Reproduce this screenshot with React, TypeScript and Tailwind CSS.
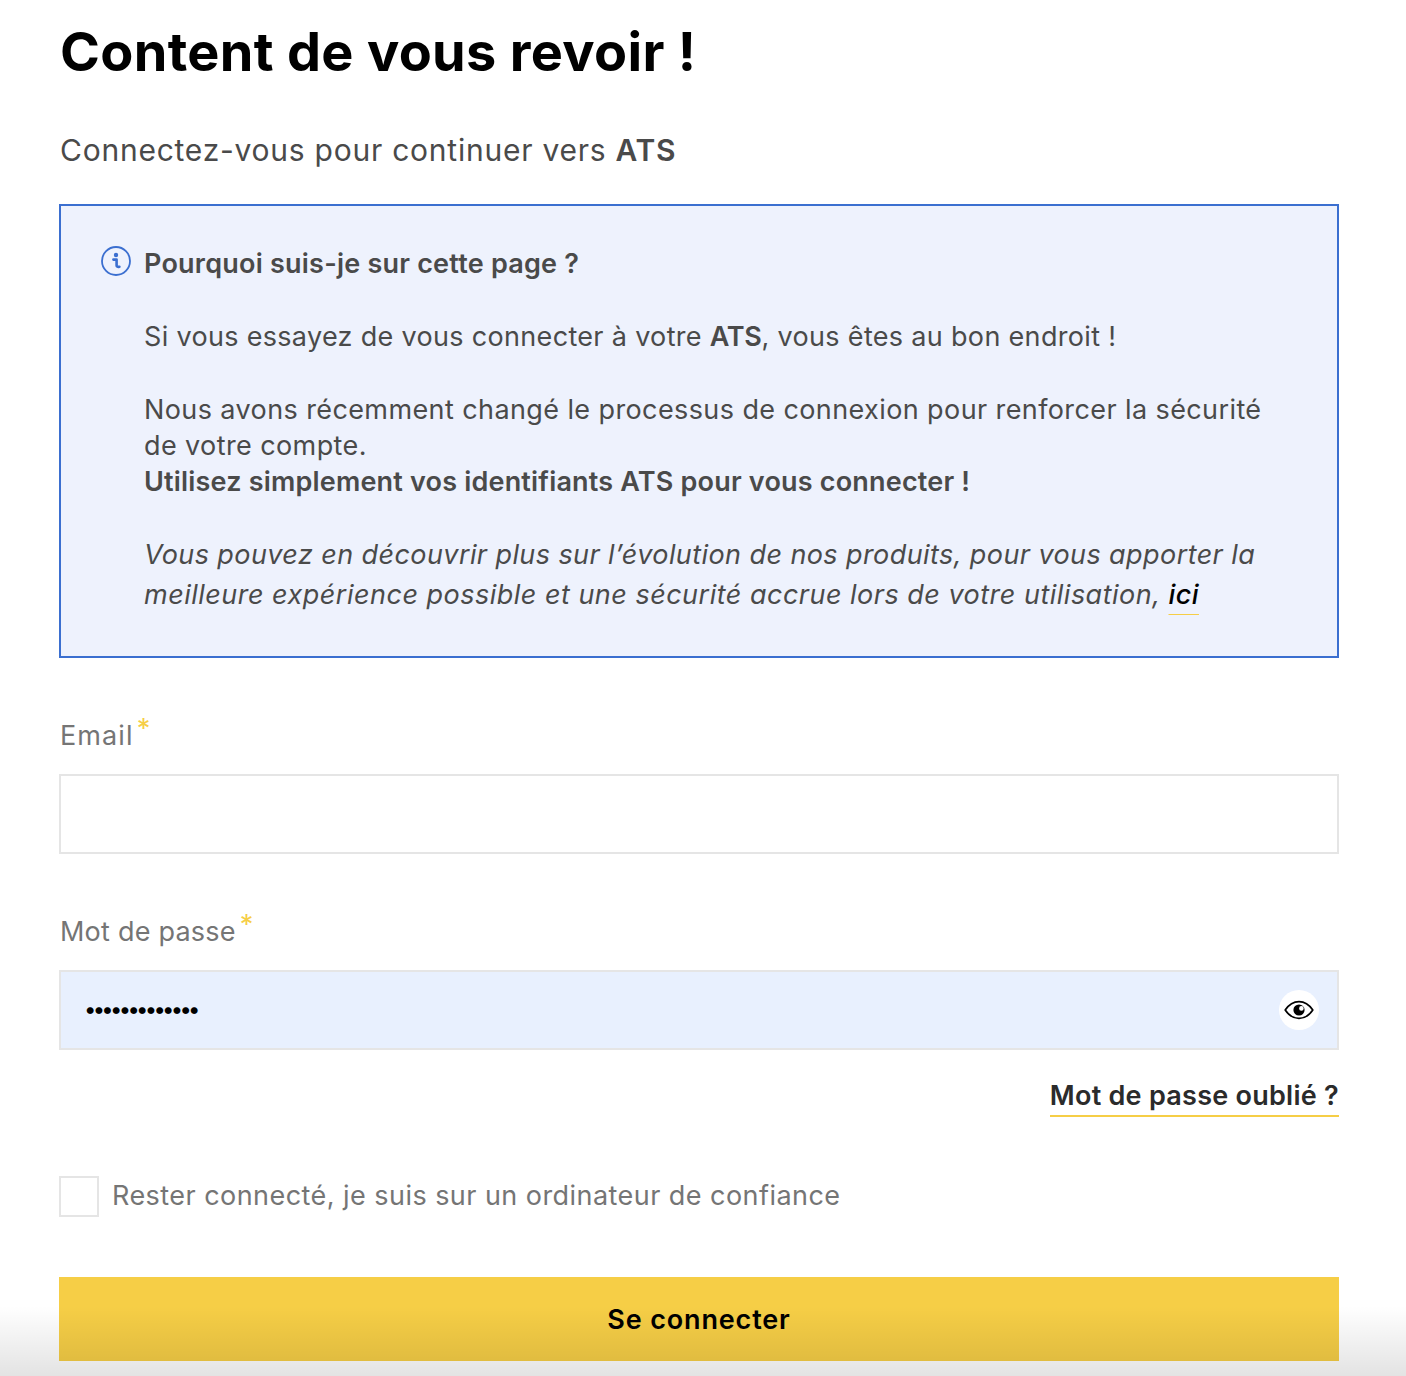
import React from "react";

function InfoIcon() {
  return (
    <svg className="absolute left-[40px] top-[40px]" width="30" height="30" viewBox="0 0 30 30" fill="none">
      <circle cx="15" cy="15" r="14" stroke="#3b6fd0" strokeWidth="1.8" />
      <circle cx="15" cy="9" r="2.200" fill="#3b6fd0" />
      <path d="M12.4 13.600h3.200v5.800c0 1.300 1 1.700 2.800 1.300" stroke="#3b6fd0" strokeWidth="2.600" strokeLinecap="round" strokeLinejoin="round" />
    </svg>
  );
}

function EyeIcon() {
  return (
    <svg width="30" height="20" viewBox="0 0 30 20" fill="none">
      <path d="M1.200 10C5 4.400 9.600 1.600 15 1.600S25 4.400 28.800 10C25 15.600 20.400 18.400 15 18.400S5 15.600 1.200 10Z" stroke="#000" strokeWidth="1.700" strokeLinejoin="round" />
      <path fillRule="evenodd" d="M15 4.400a5.600 5.600 0 1 0 0 11.200a5.600 5.600 0 0 0 0-11.200Zm2.400 1.700a2.300 2.300 0 1 0 0 4.600a2.300 2.300 0 0 0 0-4.600Z" fill="#000" />
    </svg>
  );
}

export default function App() {
  return (
    <div className="relative h-[1376px] overflow-hidden bg-white pl-[59px] pr-[67px] font-['Inter',sans-serif]">
      <h1 className="pt-[20px] pl-px text-[54px] font-bold leading-[64px] tracking-[0.33px] text-black">Content de vous revoir !</h1>
      <p className="mt-[41px] pl-px text-[30px] leading-[50px] tracking-[0.76px] text-[#4a4a4a]">
        Connectez-vous pour continuer vers <b className="font-semibold">ATS</b>
      </p>

      <div className="relative mt-[29px] h-[454px] border-2 border-[#3b6fd0] bg-[#eef2fd] pl-[83px] pr-[60px] pt-[40px] text-[27px] leading-[36px] tracking-[0.4px] text-[#4a4a4a]">
        <InfoIcon />
        <p className="font-semibold tracking-[0.22px]">Pourquoi suis-je sur cette page ?</p>
        <p className="mt-[37px] tracking-[0.32px]">Si vous essayez de vous connecter à votre <b className="font-semibold tracking-[-0.3px]">ATS</b>, vous êtes au bon endroit !</p>
        <p className="mt-[37px]">
          Nous avons récemment changé le processus de connexion pour renforcer la sécurité de votre compte.
          <br />
          <b className="font-semibold tracking-[0.19px]">Utilisez simplement vos identifiants ATS pour vous connecter !</b>
        </p>
        <p className="mt-[35px] italic leading-[40px] tracking-[0.41px]">
          Vous pouvez en découvrir plus sur l’évolution de nos produits, pour vous apporter la{" "}
          <span className="tracking-[0.49px]">meilleure expérience possible et une sécurité accrue lors de votre utilisation,</span>{" "}
          <span className="font-medium text-black underline decoration-[#f6ce46] decoration-1 underline-offset-[10px]">ici</span>
        </p>
      </div>

      <label className="mt-[60px] flex pl-px text-[27px] leading-[36px] tracking-[1.1px] text-[#757575]">
        Email
        <span className="ml-[3px] -mt-[7px] text-[#f6ce46]">*</span>
      </label>
      <input type="email" className="mt-[20px] block h-[80px] w-full border-2 border-[#e5e5e5] bg-white outline-none" />

      <label className="mt-[60px] flex pl-px text-[27px] leading-[36px] tracking-[0.22px] text-[#757575]">
        Mot de passe
        <span className="ml-[4px] -mt-[7px] text-[#f6ce46]">*</span>
      </label>
      <div className="relative mt-[20px] h-[80px]">
        <input
          type="password"
          readOnly
          value="0123456789012"
          className="block h-full w-full border-2 border-[#e5e5e5] bg-[#e8f0fe] pb-[2px] pl-[23px] pr-[70px] text-[22px] tracking-[-3.7px] text-black outline-none"
        />
        <span className="absolute right-[20px] top-[20px] flex h-[40px] w-[40px] items-center justify-center rounded-full bg-white">
          <EyeIcon />
        </span>
      </div>

      <div className="mt-[27px] flex justify-end">
        <a className="border-b-2 border-[#f6ce46] text-[27px] font-semibold leading-[38px] tracking-[0.26px] text-[#2b2b2b]">Mot de passe oublié ?</a>
      </div>

      <div className="mt-[59px] flex items-center gap-[13px]">
        <span className="h-[41px] w-[40px] border-2 border-[#e5e5e5] bg-white" />
        <span className="pb-[2px] text-[27px] leading-[36px] tracking-[0.45px] text-[#757575]">Rester connecté, je suis sur un ordinateur de confiance</span>
      </div>

      <button className="mt-[60px] block h-[84px] w-full bg-[#f6ce46] pt-[2px] text-[27px] font-semibold tracking-[0.85px] text-black">Se connecter</button>

      <div className="pointer-events-none absolute inset-x-0 bottom-0 h-[70px] bg-gradient-to-b from-transparent to-black/11" />
    </div>
  );
}
